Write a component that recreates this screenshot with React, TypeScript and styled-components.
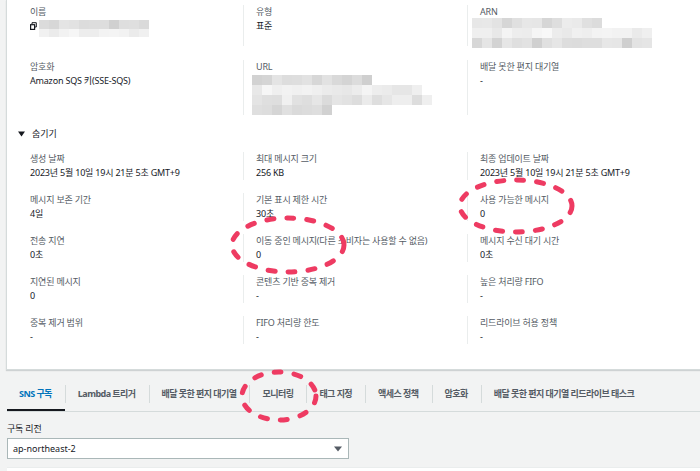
import React from "react";
import styled, { createGlobalStyle } from "styled-components";

const GlobalStyle = createGlobalStyle`
  html, body {
    margin: 0;
    padding: 0;
    background: #f2f3f3;
  }
  body {
    font-family: "Noto Sans", "Noto Sans CJK KR", sans-serif;
  }
`;

const Page = styled.div`
  position: relative;
  width: 700px;
  height: 471px;
  overflow: hidden;
  background: #f2f3f3;
`;

const Panel = styled.section`
  box-sizing: border-box;
  width: 720px;
  height: 370px;
  margin-left: 6px;
  padding: 5px 0 0 23px;
  background: #fff;
  border-left: 1px solid #d5dbdb;
  border-bottom: 1px solid #d5dbdb;
  box-shadow: 0 1px 1px rgba(0, 28, 36, 0.15);
`;

const Columns = styled.div<{ $rows: string; $gap: number }>`
  display: grid;
  grid-template-columns: 213px 224px 230px;
  grid-template-rows: ${(p) => p.$rows};
  row-gap: ${(p) => p.$gap}px;
`;

const Cell = styled.div<{ $first?: boolean }>`
  display: flex;
  flex-direction: column;
  min-width: 0;
  border-left: ${(p) => (p.$first ? "none" : "1px solid #eaeded")};
  padding-left: ${(p) => (p.$first ? 0 : 12)}px;
`;

const Label = styled.div`
  font-size: 9px;
  line-height: 13px;
  letter-spacing: -0.2px;
  color: #545b64;
  white-space: nowrap;
`;

const Value = styled.div`
  display: flex;
  align-items: flex-start;
  margin-top: 1px;
  font-size: 9px;
  line-height: 14px;
  letter-spacing: -0.2px;
  color: #16191f;
  white-space: nowrap;
`;

const Toggle = styled.div`
  display: flex;
  align-items: center;
  gap: 7px;
  margin: 12px 0 11px -12px;
  font-size: 9px;
  line-height: 14px;
  color: #16191f;
`;

const Lower = styled.div`
  padding-left: 7px;
`;

const TabBar = styled.nav`
  display: flex;
  align-items: stretch;
  margin-top: 8px;
  border-bottom: 1px solid #d5dbdb;
`;

const Tab = styled.div<{ $active?: boolean }>`
  display: flex;
  align-items: center;
  height: 31px;
  padding: 0 13px 0 12px;
  font-size: 9px;
  font-weight: 700;
  letter-spacing: -0.55px;
  color: ${(p) => (p.$active ? "#0073bb" : "#545b64")};
  border-bottom: 2px solid ${(p) => (p.$active ? "#16191f" : "transparent")};
  white-space: nowrap;
`;

const TabDivider = styled.span`
  align-self: flex-start;
  width: 1px;
  height: 18px;
  margin-top: 7px;
  background: #d5dbdb;
`;

const FieldLabel = styled(Label)`
  margin-top: 10px;
  color: #16191f;
`;

const Select = styled.div`
  box-sizing: border-box;
  display: flex;
  align-items: center;
  justify-content: space-between;
  width: 342px;
  height: 21px;
  margin-top: 3px;
  padding: 0 6px 0 5px;
  background: #fff;
  border: 1px solid #aab7b8;
  font-size: 9px;
  color: #16191f;
`;

const NextPanel = styled.div`
  height: 20px;
  margin-top: 8px;
  background: #fff;
  border-top: 1px solid #eaeded;
`;

const MosaicBox = styled.div<{ $top: number; $left: number }>`
  display: flex;
  flex-direction: column;
  margin-top: ${(p) => p.$top}px;
  margin-left: ${(p) => p.$left}px;
`;

const MosaicRow = styled.div<{ $h: number }>`
  display: flex;
  height: ${(p) => p.$h}px;
`;

const Block = styled.span`
  width: 10px;
  height: 100%;
`;

const Overlay = styled.svg`
  position: absolute;
  left: 0;
  top: 0;
  pointer-events: none;
`;

function shade(seed: number, min: number, max: number) {
  const x = Math.sin(seed * 12.9898 + 78.233) * 43758.5453;
  const f = x - Math.floor(x);
  const v = Math.round(min + f * (max - min));
  return `rgb(${v},${v},${v})`;
}

type MosaicRowSpec = { n: number; min: number; max: number };

function Mosaic({
  rows,
  h,
  seed,
  top = 0,
  left = 0,
}: {
  rows: MosaicRowSpec[];
  h: number;
  seed: number;
  top?: number;
  left?: number;
}) {
  return (
    <MosaicBox $top={top} $left={left}>
      {rows.map((r, i) => (
        <MosaicRow key={i} $h={h}>
          {Array.from({ length: r.n }).map((_, j) => (
            <Block
              key={j}
              style={{ backgroundColor: shade(seed + i * 31 + j, r.min, r.max) }}
            />
          ))}
        </MosaicRow>
      ))}
    </MosaicBox>
  );
}

function CopyIcon() {
  return (
    <svg width="7" height="8" viewBox="0 0 7 8" style={{ marginTop: 3 }}>
      <path d="M2 2.2V0.7H6.3V5H5" fill="none" stroke="#16191f" strokeWidth="1" />
      <rect x="0.6" y="2.7" width="4" height="4.7" fill="none" stroke="#16191f" strokeWidth="1.2" />
    </svg>
  );
}

function Caret() {
  return (
    <svg width="7" height="6" viewBox="0 0 7 6">
      <path d="M0 0.5H7L3.5 5.5Z" fill="#16191f" />
    </svg>
  );
}

function SelectCaret() {
  return (
    <svg width="8" height="6" viewBox="0 0 8 6">
      <path d="M0 0.5H8L4 5.5Z" fill="#545b64" />
    </svg>
  );
}

type Field = { label: string; value: React.ReactNode };

const details: Field[] = [
  { label: "생성 날짜", value: "2023년 5월 10일 19시 21분 5초 GMT+9" },
  { label: "최대 메시지 크기", value: "256 KB" },
  { label: "최종 업데이트 날짜", value: "2023년 5월 10일 19시 21분 5초 GMT+9" },
  { label: "메시지 보존 기간", value: "4일" },
  { label: "기본 표시 제한 시간", value: "30초" },
  { label: "사용 가능한 메시지", value: "0" },
  { label: "전송 지연", value: "0초" },
  { label: "이동 중인 메시지(다른 소비자는 사용할 수 없음)", value: "0" },
  { label: "메시지 수신 대기 시간", value: "0초" },
  { label: "지연된 메시지", value: "0" },
  { label: "콘텐츠 기반 중복 제거", value: "-" },
  { label: "높은 처리량 FIFO", value: "-" },
  { label: "중복 제거 범위", value: "-" },
  { label: "FIFO 처리량 한도", value: "-" },
  { label: "리드라이브 허용 정책", value: "-" },
];

const tabs = [
  "SNS 구독",
  "Lambda 트리거",
  "배달 못한 편지 대기열",
  "모니터링",
  "태그 지정",
  "액세스 정책",
  "암호화",
  "배달 못한 편지 대기열 리드라이브 태스크",
];

export default function App() {
  return (
    <>
      <GlobalStyle />
      <Page>
        <Panel>
          <Columns $rows="41px 55px" $gap={14}>
            <Cell $first>
              <Label>이름</Label>
              <Value>
                <CopyIcon />
                <Mosaic
                  seed={3}
                  h={8.5}
                  top={1}
                  left={2}
                  rows={[
                    { n: 11, min: 208, max: 232 },
                    { n: 11, min: 234, max: 246 },
                  ]}
                />
              </Value>
            </Cell>
            <Cell>
              <Label>유형</Label>
              <Value>표준</Value>
            </Cell>
            <Cell>
              <Label>ARN</Label>
              <Mosaic
                seed={40}
                h={10}
                left={-8}
                rows={[
                  { n: 13, min: 212, max: 236 },
                  { n: 18, min: 232, max: 248 },
                  { n: 18, min: 206, max: 232 },
                ]}
              />
            </Cell>
            <Cell $first>
              <Label>암호화</Label>
              <Value>Amazon SQS 키(SSE-SQS)</Value>
            </Cell>
            <Cell>
              <Label>URL</Label>
              <Mosaic
                seed={90}
                h={10}
                top={2}
                left={-4}
                rows={[
                  { n: 12, min: 206, max: 230 },
                  { n: 17, min: 230, max: 246 },
                  { n: 18, min: 218, max: 240 },
                  { n: 8, min: 208, max: 228 },
                ]}
              />
            </Cell>
            <Cell>
              <Label>배달 못한 편지 대기열</Label>
              <Value>-</Value>
            </Cell>
          </Columns>

          <Toggle>
            <Caret />
            숨기기
          </Toggle>

          <Columns $rows="repeat(5, 28px)" $gap={13}>
            {details.map((f, i) => (
              <Cell key={f.label} $first={i % 3 === 0}>
                <Label>{f.label}</Label>
                <Value>{f.value}</Value>
              </Cell>
            ))}
          </Columns>
        </Panel>

        <Lower>
          <TabBar>
            {tabs.map((t, i) => (
              <React.Fragment key={t}>
                {i > 0 && <TabDivider />}
                <Tab $active={i === 0}>{t}</Tab>
              </React.Fragment>
            ))}
          </TabBar>
          <FieldLabel>구독 리전</FieldLabel>
          <Select>
            ap-northeast-2
            <SelectCaret />
          </Select>
          <NextPanel />
        </Lower>

        <Overlay width="700" height="471" viewBox="0 0 700 471">
          <g fill="none" stroke="#ee3b62" strokeWidth="5" strokeLinecap="round" strokeDasharray="7 13">
            <ellipse cx="288" cy="245" rx="56" ry="27" />
            <ellipse cx="516" cy="206" rx="56" ry="26" />
            <ellipse cx="279" cy="396" rx="37" ry="24" />
          </g>
        </Overlay>
      </Page>
    </>
  );
}
